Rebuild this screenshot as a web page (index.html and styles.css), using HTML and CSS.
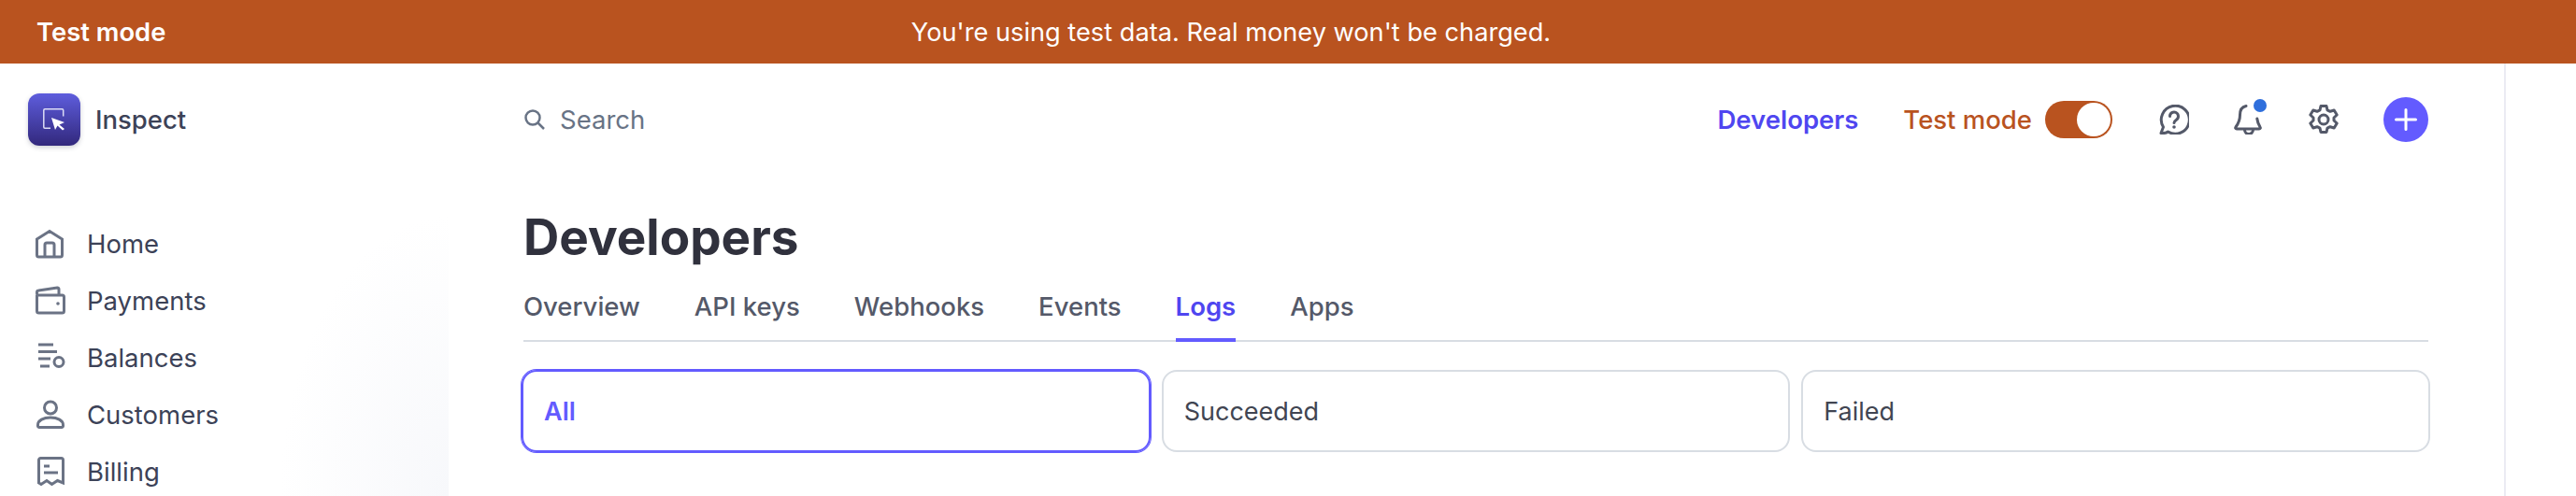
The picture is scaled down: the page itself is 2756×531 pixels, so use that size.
FILE: index.html
```html
<!DOCTYPE html>
<html lang="en-US">

<head>
  <meta charset="utf-8" />
  <title>Developers - Logs</title>
  <link rel="stylesheet" href="styles.css">
</head>

<body>
  <header class="banner">
    <strong class="banner-label">Test mode</strong>
    <span class="banner-text">You're using test data. Real money won't be charged.</span>
  </header>

  <div class="shell">
    <aside class="sidebar">
      <div class="account">
        <div class="account-logo">
          <svg width="56" height="56" viewBox="0 0 56 56" fill="none">
            <path d="M24 37.2H18a1.2 1.2 0 0 1-1.200-1.200V18a1.200 1.200 0 0 1 1.200-1.200h18.500a1.200 1.200 0 0 1 1.200 1.200v6.500" stroke="#dcdcf5" stroke-width="1.500" />
            <path d="M25 26l14 5-5.500 2.500 5.500 4.500-2 1.500-5.500-5-2.500 4.500z" fill="#fff" />
          </svg>
        </div>
        <span class="account-name">Inspect</span>
      </div>
      <nav class="side-nav">
        <a class="side-link">
          <svg class="side-icon" viewBox="0 0 32 32" fill="none">
            <path d="M1.500 11 15 2.500 28.500 11v17a2 2 0 0 1-2 2h-23a2 2 0 0 1-2-2z" />
            <path d="M10 30V17a2 2 0 0 1 2-2h6a2 2 0 0 1 2 2v13" />
          </svg>
          Home
        </a>
        <a class="side-link">
          <svg class="side-icon" viewBox="0 0 32 32" fill="none">
            <path d="M1.500 10v17a2 2 0 0 0 2 2h25a2 2 0 0 0 2-2V12a2 2 0 0 0-2-2h-25a2 2 0 0 1-2-2V7a2 2 0 0 1 1.800-2l20-3a1.500 1.500 0 0 1 1.700 1.500V10" />
            <circle cx="24" cy="19" r="1.800" fill="#6b7385" stroke="none" />
          </svg>
          Payments
        </a>
        <a class="side-link">
          <svg class="side-icon" viewBox="0 0 32 32" fill="none">
            <path d="M3 2h16M3 9.500h20M3 17h13M5 25h10" />
            <circle cx="25" cy="20.500" r="5" />
          </svg>
          Balances
        </a>
        <a class="side-link">
          <svg class="side-icon" viewBox="0 0 32 32" fill="none">
            <circle cx="16" cy="8.500" r="6.500" />
            <path d="M2.500 27c0-5 6-8 13.500-8s13.500 3 13.500 8v1a1.500 1.500 0 0 1-1.500 1.500H4A1.500 1.500 0 0 1 2.500 28z" />
          </svg>
          Customers
        </a>
        <a class="side-link">
          <svg class="side-icon" viewBox="0 0 32 32" fill="none">
            <path d="M3.500 28V3.500a2 2 0 0 1 2-2h22a2 2 0 0 1 2 2V28l-6-2.500-6 4-5.500-4-6 4z" />
            <path d="M9 10h6M9 17h15" />
          </svg>
          Billing
        </a>
      </nav>
    </aside>

    <main class="content">
      <div class="topbar">
        <div class="search">
          <svg class="search-icon" viewBox="0 0 22 22" fill="none">
            <circle cx="9" cy="9" r="7.500" />
            <path d="M14.500 14.500 21 21" />
          </svg>
          Search
        </div>
        <a class="top-link">Developers</a>
        <div class="mode">
          <span>Test mode</span>
          <span class="toggle"><span class="toggle-knob"></span></span>
        </div>
        <div class="top-icons">
          <svg class="top-icon" viewBox="0 0 32 32" fill="none">
            <path d="M2 30.500 4.500 24A15 15 0 1 1 9.500 29c-2 1.500-5 1.800-7.500 1.500z" stroke-linejoin="round" />
            <path d="M11.500 12.500a4.500 4.500 0 1 1 7 3.700c-1.500 1-2.500 1.800-2.500 3.300" />
            <circle cx="16" cy="24" r="1.800" fill="#545969" stroke="none" />
          </svg>
          <span class="bell">
            <svg class="top-icon" viewBox="0 0 32 32" fill="none">
              <path d="M13 1.500C8 2.500 6.500 6.500 6.500 11c0 5-1.500 9-4.500 13-.7 1-.2 2 1 2h24c1.200 0 1.700-1 1-2-1.800-3-2.800-5.500-3.200-9" />
              <path d="M11.500 27a4.500 4.500 0 0 0 9 0" />
            </svg>
            <span class="bell-dot"></span>
          </span>
          <svg class="top-icon" viewBox="0 0 32 32" fill="none">
            <path d="M13 1.500h6l1 4.300 3 1.500 4.200-1.300 3 5-3.200 3v3l3.200 3-3 5-4.200-1.300-3 1.500-1 4.300h-6l-1-4.300-3-1.500-4.200 1.300-3-5 3.200-3v-3l-3.200-3 3-5L9 7.300l3-1.500z" stroke-linejoin="round" />
            <circle cx="16" cy="16" r="5" />
          </svg>
        </div>
        <button class="add-btn">
          <svg width="24" height="24" viewBox="0 0 24 24" fill="none">
            <path d="M12 1.500v21M1.500 12h21" stroke="#fff" stroke-width="3" stroke-linecap="round" />
          </svg>
        </button>
      </div>

      <h1 class="page-title">Developers</h1>

      <nav class="tabs">
        <a class="tab">Overview</a>
        <a class="tab">API keys</a>
        <a class="tab">Webhooks</a>
        <a class="tab">Events</a>
        <a class="tab tab-active">Logs</a>
        <a class="tab">Apps</a>
      </nav>

      <div class="filters">
        <div class="filter filter-active">All</div>
        <div class="filter">Succeeded</div>
        <div class="filter">Failed</div>
      </div>
    </main>

    <div class="rail"></div>
  </div>
</body>

</html>
```

FILE: styles.css
```css
* {
  box-sizing: border-box;
}

body {
  margin: 0;
  background-color: #fff;
  color: #3c4257;
  font-family: Inter, "Liberation Sans", sans-serif;
  overflow: hidden;
}

/* top banner */
.banner {
  display: flex;
  position: relative;
  align-items: center;
  justify-content: center;
  height: 68px;
  padding-right: 122px;
  background-color: #b9531f;
  color: #fff;
  font-size: 27.2px;
}

.banner-label {
  position: absolute;
  left: 39px;
  font-weight: 600;
  font-size: 27.4px;
}

.shell {
  display: flex;
  height: 463px;
}

/* left column */
.sidebar {
  flex: none;
  width: 480px;
  padding: 32px 0 0 30px;
  background: radial-gradient(ellipse 180px 300px at 100% 100%, #f7f8fb, #fff);
}

.account {
  display: flex;
  align-items: center;
  gap: 16px;
}

.account-logo {
  width: 56px;
  height: 56px;
  border-radius: 12px;
  background: linear-gradient(#5e5ddd, #32287c);
  box-shadow: 0 2px 5px rgba(60, 66, 87, .25);
}

.account-logo svg {
  display: block;
}

.account-name {
  font-size: 27.5px;
  font-weight: 500;
  color: #3c4257;
}

.side-nav {
  display: flex;
  flex-direction: column;
  margin-top: 74px;
  padding-left: 8px;
}

.side-link {
  display: flex;
  align-items: center;
  gap: 23px;
  height: 61px;
  font-size: 27.5px;
  color: #3c4257;
}

.side-icon {
  width: 32px;
  height: 32px;
  stroke: #6b7385;
  stroke-width: 3;
}

/* page area */
.content {
  flex: none;
  width: 2038px;
  margin-left: 80px;
}

.topbar {
  display: flex;
  align-items: center;
  height: 120px;
}

.search {
  display: flex;
  flex: 1;
  align-items: center;
  gap: 16px;
  padding-left: 1px;
  font-size: 27.5px;
  color: #687385;
}

.search-icon {
  width: 22px;
  height: 22px;
  stroke: #687385;
  stroke-width: 2.5;
}

.top-link {
  margin-right: 48px;
  font-size: 27.5px;
  font-weight: 600;
  color: #4f46f0;
}

.mode {
  display: flex;
  align-items: center;
  gap: 14px;
  font-size: 27.5px;
  font-weight: 500;
  color: #b9531f;
}

.toggle {
  display: flex;
  justify-content: flex-end;
  width: 72px;
  height: 40px;
  padding: 2px;
  border-radius: 20px;
  background-color: #b9531f;
}

.toggle-knob {
  width: 36px;
  height: 36px;
  border-radius: 50%;
  background-color: #fff;
}

.top-icons {
  display: flex;
  align-items: center;
  gap: 48px;
  margin-left: 50px;
}

.top-icon {
  display: block;
  width: 32px;
  height: 32px;
  stroke: #545969;
  stroke-width: 3;
  stroke-linecap: round;
}

.bell {
  position: relative;
}

.bell-dot {
  position: absolute;
  top: -6px;
  right: -3px;
  width: 14px;
  height: 14px;
  border-radius: 50%;
  background-color: #2f6fdc;
}

.add-btn {
  display: flex;
  align-items: center;
  justify-content: center;
  width: 48px;
  height: 48px;
  margin-left: 48px;
  border: 0;
  border-radius: 50%;
  padding: 0;
  background-color: #635bff;
}

.page-title {
  margin: 30px 0 0;
  font-size: 53px;
  line-height: 72px;
  font-weight: 700;
  color: #30313d;
}

.tabs {
  display: flex;
  gap: 58px;
  margin-top: 20px;
  border-bottom: 2px solid #d8dde3;
}

.tab {
  margin-bottom: -2px;
  border-bottom: 4px solid transparent;
  padding-bottom: 16px;
  font-size: 27.5px;
  line-height: 36px;
  font-weight: 500;
  color: #545969;
}

.tab-active {
  border-bottom-color: #635bff;
  color: #4f46f0;
  font-weight: 600;
}

.filters {
  display: flex;
  gap: 12px;
  margin: 30px -2px 0;
}

.filter {
  display: flex;
  flex: 1;
  align-items: center;
  height: 88px;
  padding-left: 22px;
  border: 2px solid #d8dde3;
  border-radius: 16px;
  font-size: 27px;
  color: #414552;
}

.filter-active {
  border-color: #635bff;
  box-shadow: 0 0 0 1px #635bff;
  color: #635bff;
  font-weight: 600;
}

.rail {
  flex: none;
  width: 2px;
  margin-left: 81px;
  background-color: #ebebf3;
}
```
